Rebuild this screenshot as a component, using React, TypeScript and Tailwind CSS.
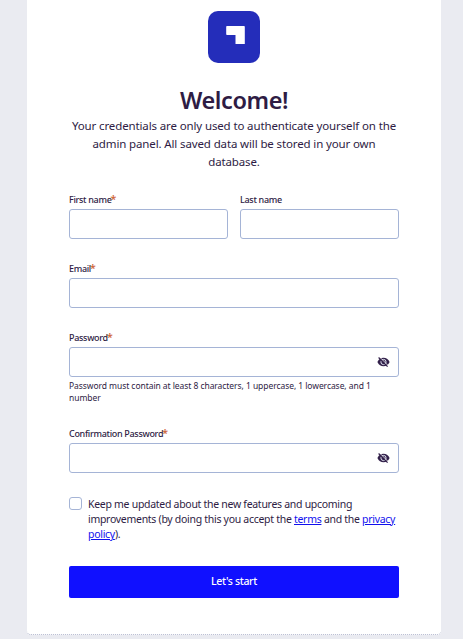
import type { ReactNode } from "react";

function Logo() {
  return (
    <svg className="size-[52px]" viewBox="0 0 52 52" aria-hidden="true">
      <rect width="52" height="52" rx="10" fill="#242dba" />
      <path d="M19 15H36Q36.8 15 36.8 15.8V33H27.5V24H19Q18.2 24 18.2 23.2V15.8Q18.2 15 19 15Z" fill="#fff" />
    </svg>
  );
}

function EyeStriked() {
  return (
    <svg className="h-[10px] w-[13px] shrink-0" viewBox="0 0 13 10" aria-hidden="true">
      <path d="M0.4 5C1.8 2.1 3.9 0.8 6.5 0.8s4.7 1.3 6.1 4.2c-1.4 2.9-3.5 4.2-6.1 4.2S1.8 7.9.4 5Z" fill="#32204a" />
      <circle cx="6.5" cy="5" r="2.6" fill="none" stroke="#dfe2f0" strokeWidth="1" />
      <path d="M2.5 0 11.5 9" stroke="#fff" strokeWidth="0.9" />
      <path d="M1.6 0.5 10.6 9.6" stroke="#32204a" strokeWidth="1.2" />
    </svg>
  );
}

type FieldProps = { label: string; required?: boolean; secret?: boolean; hint?: ReactNode };

function Field({ label, required, secret, hint }: FieldProps) {
  return (
    <div className="flex min-w-0 flex-1 flex-col">
      <div className="flex h-3 text-[9px] leading-3 font-medium tracking-[-0.31px] whitespace-nowrap">
        {label}
        {required && <span className="-ml-px text-[10.5px] leading-[10px] font-semibold text-[#d0683c]">*</span>}
      </div>
      <div className="mt-[3px] flex h-[30px] items-center justify-end rounded-[3px] border border-[#a5b4d6] bg-white pr-[8px]">
        {secret && <EyeStriked />}
      </div>
      {hint && (
        <div className="mt-[3px] text-[8.5px] leading-3 tracking-[-0.06px] whitespace-nowrap">{hint}</div>
      )}
    </div>
  );
}

export default function App() {
  return (
    <div className="flex h-[639px] w-full justify-center overflow-hidden bg-[#eaebf1] pl-[5px] font-['Noto_Sans','Open_Sans',sans-serif] text-[#2e1c44]">
      <main className="flex h-[635px] w-[414px] flex-col rounded-b-[4px] border-b border-dotted border-[#b4b9cf] bg-white px-[42px] pt-[11px]">
        <div className="flex justify-center">
          <Logo />
        </div>
        <h1 className="mt-[22px] text-center text-[23.5px] leading-[30px] font-semibold tracking-[-0.4px]">
          Welcome!
        </h1>
        <p className="mt-[2px] text-center text-[11.5px] leading-[18px] tracking-[-0.13px] whitespace-nowrap">
          Your credentials are only used to authenticate yourself on the
          <br />
          admin panel. All saved data will be stored in your own
          <br />
          database.
        </p>
        <form className="mt-[23px] flex flex-col gap-6">
          <div className="flex gap-3">
            <Field label="First name" required />
            <Field label="Last name" />
          </div>
          <Field label="Email" required />
          <Field
            label="Password"
            required
            secret
            hint={
              <>
                Password must contain at least 8 characters, 1 uppercase, 1 lowercase, and 1
                <br />
                number
              </>
            }
          />
          <Field label="Confirmation Password" required secret />
          <div className="flex">
            <span className="size-[13px] shrink-0 rounded-[3px] border border-[#a5b4d6] bg-white" />
            <p className="ml-[6px] text-[10.5px] leading-[15px] tracking-[-0.29px] whitespace-nowrap">
              Keep me updated about the new features and upcoming
              <br />
              improvements (by doing this you accept the <a className="text-[#1010ee] underline">terms</a> and the{" "}
              <a className="text-[#1010ee] underline">privacy</a>
              <br />
              <a className="text-[#1010ee] underline">policy</a>).
            </p>
          </div>
          <button
            type="button"
            className="h-8 rounded-[2px] bg-[#1010ff] text-[10.5px] font-medium tracking-[-0.33px] text-white"
          >
            Let's start
          </button>
        </form>
      </main>
    </div>
  );
}
